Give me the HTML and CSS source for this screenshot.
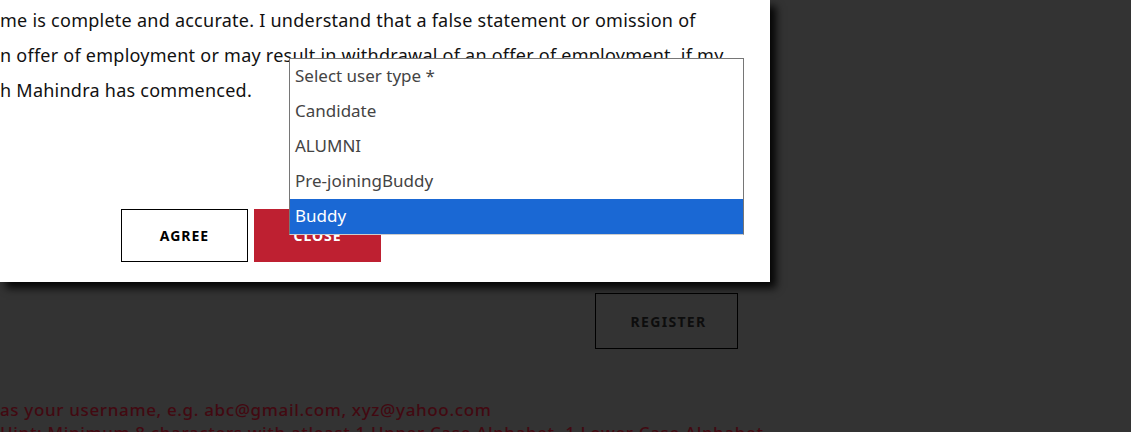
FILE: index.html
```html
<!DOCTYPE html>
<html lang="en">
<head>
<meta charset="utf-8">
<title>Register</title>
<link rel="stylesheet" href="styles.css">
</head>
<body>
<main class="page">
  <div class="register-row">
    <button class="register-btn" type="button">REGISTER</button>
  </div>
  <div class="hints">
    <p class="hint">as your username, e.g. abc@gmail.com, xyz@yahoo.com</p>
    <p class="hint">Hint: Minimum 8 characters with atleast 1 Upper Case Alphabet, 1 Lower Case Alphabet</p>
  </div>
</main>

<div class="modal">
  <div class="modal-text">
    <p class="line">me is complete and accurate. I understand that a false statement or omission of</p>
    <p class="line">n offer of employment or may result in withdrawal of an offer of employment, if my</p>
    <p class="line">h Mahindra has commenced.</p>
  </div>
  <div class="modal-actions">
    <button class="btn btn-agree" type="button">AGREE</button>
    <button class="btn btn-close" type="button">CLOSE</button>
  </div>
</div>

<ul class="dropdown">
  <li class="opt">Select user type *</li>
  <li class="opt">Candidate</li>
  <li class="opt">ALUMNI</li>
  <li class="opt">Pre-joiningBuddy</li>
  <li class="opt opt-active">Buddy</li>
</ul>
</body>
</html>
```
FILE: styles.css
```css
html, body {
  margin: 0;
  padding: 0;
}
body {
  width: 1131px;
  height: 432px;
  overflow: hidden;
  background: #333333;
  font-family: "Noto Sans", "Open Sans", sans-serif;
  position: relative;
}
.page {
  padding-top: 293px;
  width: 738px;
}
.register-row {
  display: flex;
  justify-content: flex-end;
}
.register-btn {
  width: 143px;
  height: 56px;
  border: 1px solid #000;
  background: transparent;
  color: #0d0d0d;
  font-family: inherit;
  font-weight: 700;
  font-size: 14px;
  letter-spacing: 1.3px;
  padding: 0 0 0 4px;
}
.hints {
  padding-top: 49px;
}
.hint {
  margin: 0;
  white-space: nowrap;
  color: #420911;
  font-size: 17px;
  font-weight: 500;
  letter-spacing: 0.65px;
  line-height: 23px;
}
.modal {
  position: absolute;
  left: 0;
  top: 0;
  width: 770px;
  height: 282px;
  background: #fff;
  box-shadow: 6px 6px 8px rgba(0, 0, 0, 0.9);
}
.modal-text {
  padding-top: 3px;
}
.line {
  margin: 0;
  white-space: nowrap;
  color: #111;
  font-size: 18px;
  letter-spacing: 0.25px;
  line-height: 35px;
}
.modal-actions {
  display: flex;
  gap: 6px;
  padding-left: 121px;
  padding-top: 101px;
}
.btn {
  width: 127px;
  height: 53px;
  font-family: inherit;
  font-weight: 700;
  font-size: 14px;
  letter-spacing: 1px;
  padding: 0;
}
.btn-agree {
  background: #fff;
  border: 1px solid #000;
  color: #000;
}
.btn-close {
  background: #be2031;
  border: none;
  color: #fff;
}
.dropdown {
  position: absolute;
  left: 289px;
  top: 58px;
  width: 453px;
  margin: 0;
  padding: 0;
  list-style: none;
  background: #fff;
  border: 1px solid #767676;
  border-bottom-color: #ccc;
}
.opt {
  height: 35px;
  line-height: 34px;
  padding-left: 5px;
  font-size: 17px;
  color: #444;
}
.opt-active {
  background: #1a68d4;
  color: #fff;
}
```
